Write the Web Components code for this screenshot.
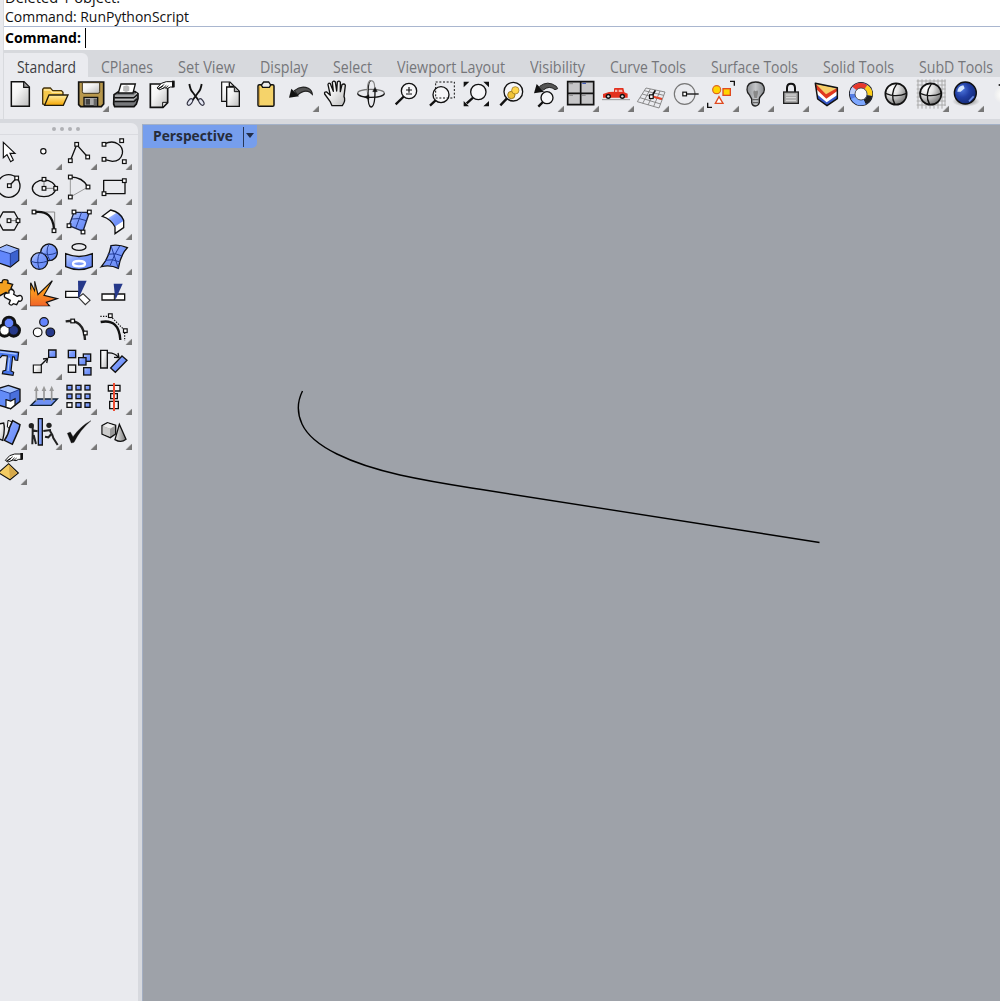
<!DOCTYPE html>
<html lang="en">
<head>
<meta charset="utf-8">
<title>Rhino – Perspective</title>
<style>
html,body{margin:0;width:1000px;height:1001px;overflow:hidden;background:#d7d9de}
</style>
</head>
<body>
<rhino-app></rhino-app>
<script>
// Artwork is drawn on a 105-unit cell. Each entry: [cell origin x, cell origin y, has flyout, shapes]
const ball = 'stroke="#111" stroke-width="4"';
const sq = (x,y,f='#fff') => `<rect x="${x-5.5}" y="${y-5.5}" width="11" height="11" fill="${f}" stroke="#111" stroke-width="3.6"/>`;
const hand = (x,y) => `<g transform="translate(${x} ${y})"><path d="M0 19L13 5 28 0H50V16H40L32 20 23 18 8 24 4 22 17 13 3 21Z" fill="#fff" stroke="#111" stroke-width="3" stroke-linejoin="round"/><path d="M11 17L22 8M18 20L28 11M26 19L34 12" stroke="#111" stroke-width="2.5"/><path d="M45 -3H53V17H45Z" fill="#111"/></g>`;
const lens = (x,y,r,hx,hy,f='#f6f6f8') => `<path d="M${x-r*.68} ${y+r*.72}L${hx} ${hy}" stroke="#111" stroke-width="7"/><circle cx="${x}" cy="${y}" r="${r}" fill="${f}" stroke="#111" stroke-width="4"/>`;
const sphere = (x,y) => `<circle cx="${x}" cy="${y}" r="32" fill="url(#gs)" stroke="#111" stroke-width="5"/><path d="M${x-32} ${y-2}Q${x} ${y+12} ${x+32} ${y-2}M${x+3} ${y-32}Q${x-20} ${y} ${x-3} ${y+32}" fill="none" stroke="#111" stroke-width="4"/>`;
const K='fill="none" stroke="#111" stroke-width="4" stroke-linejoin="round"';
const X2=i=>12+105*i, X3=i=>12+105*i-750, X4=i=>12+105*i-1500, X5=i=>12+105*i-2250;
const L=c=>-24+105*c, A=r=>45+105*r, B=r=>-300+105*r, C=r=>-630+105*r;
const ICONS = {
'new':[X2(0),3,0,`<path d="M34 17H72L88 33V91H34Z" fill="url(#gp)" stroke="#111" stroke-width="4.5"/><path d="M71 18V34H87" fill="#999" stroke="#111" stroke-width="3.5"/>`],
'open':[X2(1),3,0,`<path d="M128 84V40L132 36H151L158 44H184L189 49V57L184 86H134Z" fill="#f5c94c" stroke="#453410" stroke-width="4"/><path d="M132 42H150L157 49H186" fill="none" stroke="#ffe89c" stroke-width="4"/><path d="M134 88L147 57H204L190 88Z" fill="url(#gf)" stroke="#221c0c" stroke-width="4"/>`],
'save':[X2(2),3,1,`<path d="M236 18H311V84L304 92H242L236 86Z" fill="#b8984c" stroke="#111" stroke-width="5"/><path d="M247 20H299V47Q299 52 294 52H252Q247 52 247 47Z" fill="url(#gp)" stroke="#40351b" stroke-width="3"/><path d="M252 90V64H293V90Z" fill="#aaa" stroke="#111" stroke-width="4"/><path d="M257 69H270V86H257Z" fill="#444"/><path d="M281 68H291V89H281Z" fill="#666"/>`],
'print':[X2(3),3,0,`<path d="M342 56L356 47H405L414 53V68L409 84L402 92H344L341 84Z" fill="#77797c" stroke="#111" stroke-width="5"/><path d="M355 51L363 24H406L399 51Z" fill="#fff" stroke="#111" stroke-width="4"/><path d="M370 31L381 28 388 32V44L378 48 369 44Z" fill="#bbb"/><path d="M345 60H400L411 51M345 71H400L411 61" fill="none" stroke="#ccc" stroke-width="3"/><path d="M343 65H402L412 56M343 77H402L411 68" fill="none" stroke="#111" stroke-width="4"/>`],
'props':[X2(4),3,0,`<path d="M451 24H503V80L489 94H451Z" fill="url(#gp)" stroke="#111" stroke-width="5"/><path d="M502 79H488V94Z" fill="#eee" stroke="#111" stroke-width="3"/>${hand(471,17)}`],
'cut':[X2(5),3,0,`<path d="M568 24Q571 42 578 49L597 75M605 24Q602 42 595 49L576 75" fill="none" stroke="#111" stroke-width="5.5"/><ellipse cx="570" cy="78" rx="6" ry="11" transform="rotate(35 570 78)" fill="#e3e6f2" stroke="#334" stroke-width="3.5"/><ellipse cx="604" cy="78" rx="6" ry="11" transform="rotate(-35 604 78)" fill="#e3e6f2" stroke="#334" stroke-width="3.5"/>`],
'copy':[X2(6),3,0,`<path d="M665 18H690L702 30V76H665Z" fill="url(#gp)" stroke="#111" stroke-width="3.5"/><path d="M688 19V31H700" ${K}/><path d="M680 33H705L718 46V91H680Z" fill="url(#gp)" stroke="#111" stroke-width="4"/><path d="M703 34V47H717" fill="#aaa" stroke="#111" stroke-width="3"/>`],
'paste':[X3(7),3,0,`<rect x="24" y="26" width="48" height="65" rx="4" fill="#f5d36a" stroke="#111" stroke-width="4.5"/><path d="M28 31V88" stroke="#c99934" stroke-width="3"/><path d="M38 34L34 27 41 18H56L62 27 58 34Z" fill="#eee" stroke="#111" stroke-width="4"/>`],
'undo':[X3(8),3,1,`<path d="M133 44Q154 27 175 37 186 43 187 55L180 49Q163 39 143 57Z" fill="#555" stroke="#222" stroke-width="3.5"/><path d="M117 65L124 38 147 61Z" fill="#111"/>`],
'pan':[X3(9),3,0,`<path d="M246 89L240 76 224 54Q222 47 230 48L241 58 234 26Q235 19 241 23L250 46 247 19Q251 12 256 18L260 45 262 18Q268 12 271 19L271 47 276 26Q283 21 286 28L282 61Q288 73 277 89Z" fill="url(#gp)" stroke="#111" stroke-width="4" stroke-linejoin="round"/>`],
'rotate':[X3(10),3,0,`<path d="M323 52C323 36 403 36 403 52" stroke="#777" stroke-width="3.5" fill="none"/><path d="M323 52C323 68 403 68 403 52" ${K}/><path d="M363 14C351 14 351 93 363 93S375 60 375 45" ${K}/><path d="M363 14C351 14 352 42 352 49M363 14Q374 14 374 34" stroke="#888" stroke-width="3.5" fill="none"/><path d="M368 47L375 33 382 47ZM357 56L343 63 357 71Z" fill="#111" stroke="#111"/>`],
'zoom':[X3(11),3,0,`${lens(477,45,23,437,85)}<path d="M468 42H486M477 33V50M468 54H486" stroke="#111" stroke-width="3.5"/>`],
'zoomwin':[X3(12),3,0,`${lens(573,56,24,540,89)}<path d="M557 18H613V66H557Z" fill="none" stroke="#111" stroke-width="3" stroke-dasharray="6 5"/>`],
'zoomext':[X3(13),3,0,`${lens(685,48,23,650,82)}<path d="M641 17H658L641 34ZM717 17V34L700 17ZM641 91V75L657 91ZM717 91H700L717 75Z" fill="#111"/>`],
'zoomsel':[X4(14),3,0,`${lens(40,47,28,1,88)}<path d="M27 57L41 45" stroke="#e8bb38" stroke-width="8"/><circle cx="34" cy="57" r="11" fill="#f1c439" stroke="#8c6b17" stroke-width="2.5"/><circle cx="46" cy="43" r="11" fill="#ffd54c" stroke="#8c6b17" stroke-width="2"/>`],
'zoomundo':[X4(15),3,1,`${lens(141,65,18,115,92)}<path d="M119 31Q143 12 169 31L173 38 165 41Q148 27 130 42Z" fill="#555" stroke="#222" stroke-width="3"/><path d="M102 52L110 24 132 47Z" fill="#111"/>`],
'4view':[X4(16),3,1,`<path d="M203 17H281V86H203Z" fill="#c5c5c7" stroke="#111" stroke-width="5"/><path d="M242 17V86M203 52H281" stroke="#111" stroke-width="5"/><path d="M208 23H219M246 58H257M208 58H219" stroke="#888" stroke-width="3"/><path d="M247 22H258" stroke="#2b49b5" stroke-width="3"/>`],
'car':[X4(17),3,1,`<path d="M306 71H390" stroke="#999" stroke-width="3"/><path d="M309 65V54L327 48 342 47V38Q342 36 345 36H370L373 49 383 53V65Z" fill="#e3311f"/><path d="M345 41H352V48H345ZM356 41H366L368 48H356Z" fill="#f7b5ad"/><circle cx="325" cy="61" r="8" fill="#111"/><circle cx="367" cy="61" r="8" fill="#111"/><circle cx="325" cy="61" r="3.5" fill="#ddd"/><circle cx="367" cy="61" r="3.5" fill="#ddd"/>`],
'cplane':[X4(18),3,1,`<path d="M438 36L495 48 477 96 412 77ZM433 44L491 58M427 54L486 71M420 65L482 84M451 39L428 82M466 42L444 87M480 45L461 91" fill="none" stroke="#777" stroke-width="2.5"/><path d="M455 61L486 69" stroke="#e64327" stroke-width="6"/><path d="M456 60L466 43" stroke="#111" stroke-width="5"/>${sq(454,62)}`],
'setview':[X4(19),3,1,`<circle cx="554" cy="54" r="31" fill="none" stroke="#777" stroke-width="3.5"/><path d="M554 54H596" stroke="#111" stroke-width="4"/>${sq(554,54)}`],
'objsnap':[X4(20),3,1,`<path d="M690 16H703V29M623 80V94H636" fill="none" stroke="#111" stroke-width="4"/><circle cx="650" cy="41" r="12" fill="#ffd500" stroke="#dd6520" stroke-width="3.5"/><rect x="669" y="38" width="22" height="20" fill="#ffd500" stroke="#df4a20" stroke-width="4"/><path d="M657 62L669 82H646Z" fill="#fff" stroke="#df4a20" stroke-width="4"/>`],
'bulb':[X5(21),81,1,`<path d="M-9 119Q-9 96 17 96T43 119Q43 127 35 135 29 141 28 146V158Q25 168 16 168T5 158V147L-2 134Q-9 127 -9 119Z" fill="url(#gk)" stroke="#222" stroke-width="4"/><path d="M10 128Q10 118 17 124 25 118 24 128L21 144H13Z" fill="#888"/><path d="M7 149H26M8 158H26" stroke="#555" stroke-width="3"/>`],
'lock':[X5(22),81,1,`<path d="M111 127V114Q111 101 123 101T135 114V127" fill="none" stroke="#111" stroke-width="6"/><rect x="101" y="126" width="44" height="34" fill="#aaa" stroke="#222" stroke-width="4"/><path d="M108 135H138M108 143H138M108 151H138" stroke="#ddd" stroke-width="3"/>`],
'layer':[X5(23),81,1,`<path d="M196 100L262 113V146L231 167 203 147Z" fill="#3457c8"/><path d="M197 106L229 137 261 114V136L230 157 201 133Z" fill="#fff"/><path d="M196 100L228 130 261 114V124L229 146 199 118Z" fill="#e0381f"/><path d="M197 101L261 114 228 133Z" fill="#f7ce68"/><path d="M196 100L262 113V146L231 167 203 147Z" fill="none" stroke="#111" stroke-width="4.500" stroke-linejoin="round"/>`],
'color':[X5(24),81,1,`<circle cx="333" cy="132" r="36" fill="#111"/><g fill="none" stroke-width="15"><circle cx="333" cy="132" r="26" stroke="#557ce4"/><path d="M312 117A26 26 0 0 1 348 111" stroke="#e7392b"/><path d="M348 111A26 26 0 0 1 359 137" stroke="#ffcf18"/><path d="M359 137A26 26 0 0 1 344 156" stroke="#222"/><path d="M344 156A26 26 0 0 1 310 144" stroke="#7ea8ff"/><path d="M307 132A26 26 0 0 1 313 115" stroke="#bdcef9"/></g><circle cx="333" cy="132" r="18" fill="#f7f7fa" stroke="#333" stroke-width="2"/>`],
'shade':[X5(25),81,0,sphere(438,132)],
'shadegrid':[X5(26),81,1,`<path d="M500 93H587M500 105H587M500 117H587M500 129H587M500 141H587M500 153H587M500 165H587M504 88V176M516 88V176M528 88V176M540 88V176M552 88V176M564 88V176M576 88V176M585 88V168" stroke="#aaa" stroke-width="3"/>${sphere(542,132)}`],
'render':[X5(27),81,1,`<ellipse cx="648" cy="154" rx="42" ry="16" fill="url(#sh)"/><circle cx="646" cy="129" r="33" fill="url(#gb)" stroke="#111" stroke-width="4"/><path d="M622 125Q623 109 640 106L644 115 632 125Z" fill="#d5e6ff"/><path d="M657 154L671 139" stroke="#6f91e8" stroke-width="5"/>`],
'ghost':[X5(28),81,0,`<circle cx="757" cy="134" r="26" fill="url(#gw)"/><path d="M746 102H750V108H746Z" fill="#333"/>`],

'select':[L(0),A(0),0,`<path d="M10 67V113L21 104 32 125 40 120 30 100H45Z" fill="#fff" stroke="#111" stroke-width="3.5"/>`],
'point':[L(1),A(0),1,`<circle cx="130" cy="94" r="8" fill="#fff" stroke="#111" stroke-width="3.5"/>`],
'polyline':[L(2),A(0),1,`<path d="M211 122L230 74 263 111" ${K}/>${sq(230,73)+sq(211,122)+sq(263,111)}`],
'curve':[L(3),A(0),1,`<path d="M313 72Q337 60 354 72 370 82 367 101 362 124 337 124L312 118" ${K}/>${sq(312,73)+sq(365,62)+sq(312,118)+sq(373,125)}`],
'circle':[L(0),A(1),1,`<circle cx="26" cy="198" r="34" ${K}/><path d="M28 197L50 174" ${K}/>${sq(28,197)+sq(50,174)}`],
'ellipse':[L(1),A(1),1,`<ellipse cx="132" cy="205" rx="35" ry="25" ${K}/><path d="M132 178V205H167" stroke="#777" stroke-width="3" fill="none"/>${sq(132,178)+sq(132,205)+sq(167,205)}`],
'arc':[L(2),A(1),1,`<path d="M211 171V231L264 201" fill="none" stroke="#888" stroke-width="2.5"/><path d="M211 171Q248 171 264 201" ${K}/>${sq(211,171)+sq(264,201)+sq(211,231)}`],
'rect':[L(3),A(1),1,`<path d="M311 181H375V221H311Z" ${K}/>${sq(373,182)+sq(312,221)}`],
'polygon':[L(0),A(2),1,`<path d="M9 276H43L58 303 43 330H9L-6 303Z" ${K}/><path d="M28 302H54" stroke="#777" stroke-width="3"/>${sq(27,302)+sq(54,302)}`],
'fillet':[L(1),A(2),1,`<path d="M102 276H164V332" stroke="#888" stroke-width="3" fill="none"/><path d="M105 276Q158 270 162 327" fill="none" stroke="#111" stroke-width="7"/>${sq(102,276)+sq(162,332)}`],
'surface':[L(2),A(2),1,`<path d="M222 277L268 277 249 334 207 317Z" fill="url(#bl)" stroke="#1c2440" stroke-width="4"/><path d="M245 276L227 325M216 297Q236 292 259 302" stroke="#233b8c" stroke-width="3" fill="none"/>${sq(222,276)+sq(268,276)+sq(207,317)+sq(249,336)}`],
'revolve':[L(3),A(2),1,`<path d="M307 289L332 270 354 280 371 299V323L345 341V321Q333 297 307 289Z" fill="#fff"/><path d="M324 295L352 277Q372 289 371 302L344 320Q340 304 324 295Z" fill="url(#bl)"/><path d="M307 289L332 270Q362 277 371 301V323L345 341V321Q333 297 307 289Z" fill="none" stroke="#111" stroke-width="4"/>`],
'box':[L(0),B(3),1,`<path d="M-9 43L20 30 56 43V76L31 96-9 82Z" fill="#6287fb" stroke="#111" stroke-width="4"/><path d="M-9 44L31 56 56 44 20 31Z" fill="#9bb8ff"/><path d="M31 56L55 45V75L31 94Z" fill="#3c62cf"/><path d="M-9 44L31 56 56 44M31 56V95" fill="none" stroke="#233e96" stroke-width="3"/>`],
'union':[L(1),B(3),1,`<circle cx="147" cy="52" r="25" fill="url(#bl)" ${ball}/><circle cx="118" cy="78" r="25" fill="url(#bl)" ${ball}/><path d="M122 52Q145 66 172 52M147 27Q134 50 150 77M93 79Q117 88 143 78M119 53Q108 76 118 103" fill="none" stroke="#233d90" stroke-width="3"/>`],
'extrude':[L(2),B(3),1,`<ellipse cx="237" cy="36" rx="21" ry="10" ${K}/><path d="M197 56Q237 73 277 56V95Q237 113 197 95Z" fill="url(#bl)" stroke="#111" stroke-width="4"/><ellipse cx="237" cy="86" rx="18" ry="8" fill="#7e9cf9" stroke="#fff" stroke-width="7"/>`],
'patch':[L(3),B(3),1,`<path d="M333 32Q356 27 382 38Q362 58 355 100Q330 88 304 95Q326 70 333 32Z" fill="url(#bl)" stroke="#111" stroke-width="4"/><path d="M359 33Q342 60 330 92M323 58Q347 52 367 63M315 76Q337 70 360 81M333 32L355 100" stroke="#223c9a" stroke-width="3" fill="none"/>`],
'join':[L(0),B(4),1,`<path d="M-9 143L6 143Q7 132 16 134 27 134 23 144L38 148 33 160Q44 167 37 175L25 180 18 172-2 183Z" fill="#f4a020" stroke="#111" stroke-width="4"/><path d="M16 175L27 174Q25 162 35 164 46 167 41 178L51 184Q66 177 67 190 66 201 56 198L50 209 40 206Q34 215 27 206L31 196 20 190Q8 186 16 175Z" fill="#fff" stroke="#111" stroke-width="4"/>`],
'explode':[L(1),B(4),0,`<path d="M92 212V143L106 171 104 139 114 179 157 137 132 181 172 191 139 202 148 212Z" fill="url(#or)" stroke="#111" stroke-width="3.5"/><path d="M91 212V162L105 184V152L112 188 144 155 124 188 155 191 131 199 145 212Z" fill="url(#or)"/>`],
'trim':[L(2),B(4),0,`<path d="M197 169H236V187H197Z" fill="#fff" stroke="#111" stroke-width="4"/><path d="M249 176L270 196 256 209 235 187Z" fill="#fff" stroke="#333" stroke-width="3.5"/><path d="M234 137H260L235 191Z" fill="#26398a"/>`],
'split':[L(3),B(4),0,`<path d="M306 177H374V195H306Z" fill="#fff" stroke="#111" stroke-width="4"/><path d="M343 177V195" stroke="#111" stroke-width="3"/><path d="M341 146H368L346 195Z" fill="#26398a"/>`],
'group':[L(0),B(5),1,`<g stroke="#111" stroke-width="12"><circle cx="27" cy="264" r="16" fill="#6384ff"/><circle cx="14" cy="286" r="16" fill="#fff"/><circle cx="41" cy="286" r="16" fill="#26398a"/></g><g stroke="#111" stroke-width="2"><circle cx="14" cy="286" r="14" fill="#fff"/><circle cx="41" cy="286" r="14" fill="#26398a"/><circle cx="27" cy="264" r="14" fill="#6384ff"/></g>`],
'ungroup':[L(1),B(5),0,`<g stroke="#111" stroke-width="3.5"><circle cx="132" cy="261" r="13" fill="#6384ff"/><circle cx="113" cy="292" r="13" fill="#fff"/><circle cx="151" cy="292" r="13" fill="#26398a"/></g>`],
'edit':[L(2),B(5),0,`<path d="M197 259Q252 251 255 315" fill="none" stroke="#222" stroke-width="7"/>${sq(218,258)+sq(256,294)}`],
'cage':[L(3),B(5),1,`<path d="M302 261Q357 250 361 315" fill="none" stroke="#111" stroke-width="7"/><path d="M301 244H325M337 249L370 282M374 293V318" stroke="#111" stroke-width="3.5" stroke-dasharray="4 4"/>${sq(331,242)+sq(376,287)}`],
'text':[L(0),C(6),0,`<path d="M-11 14L56 22 53 46 45 45 43 36 38 35 33 78 41 82 39 91 7 86 9 78 17 76 22 33 7 31 1 38-11 36Z" fill="#4675ed" stroke="#111" stroke-width="3.5"/><path d="M0 21L50 27M28 38L24 78" stroke="#a9c5ff" stroke-width="4"/>`],
'move':[L(1),C(6),1,`<path d="M120 63L141 42" stroke="#111" stroke-width="4"/><path d="M129 42L143 40 140 54" ${K}/><path d="M100 60H124V83H100Z" fill="url(#gp)" stroke="#111" stroke-width="3.5"/><path d="M146 15H168V37H146Z" fill="url(#bl)" stroke="#111" stroke-width="4"/>`],
'copyobj':[L(2),C(6),0,[[205,16],[250,27],[236,38],[251,68],[205,60]].map(([x,y],i)=>`<rect x="${x}" y="${y}" width="22" height="22" fill="${i==4?'#eee':'url(#bl)'}" stroke="#111" stroke-width="4"/>`).join('')],
'orient':[L(3),C(6),0,`<path d="M302 16H322V69H302Z" fill="url(#gp)" stroke="#111" stroke-width="4"/><path d="M322 24Q343 22 355 37M342 37L357 38 354 24" ${K}/><path d="M366 33L381 46 346 82 332 69Z" fill="url(#bl)" stroke="#111" stroke-width="4"/>`],
'solid':[L(0),C(7),1,`<path d="M-9 132L25 121 60 133V169L32 191-9 179Z" fill="#638cf8"/><path d="M-9 132L30 145 60 133 25 122Z" fill="#a3c1ff"/><path d="M30 145L60 133V169L32 191Z" fill="#4a70dc"/><path d="M-9 132L30 145 60 133M30 145V165" fill="none" stroke="#233e96" stroke-width="3"/><path d="M-9 132L25 121 60 133V169L32 191-9 179" fill="none" stroke="#111" stroke-width="4"/><path d="M18 164L32 168 45 161V180L32 191 18 187Z" fill="#fff" stroke="#111" stroke-width="3.500"/>`],
'project':[L(1),C(7),1,`<path d="M93 181L112 162H172L154 181Z" fill="#6f91f4" stroke="#123" stroke-width="4"/><path d="M109 169V132M132 169V132M155 169V132" stroke="#999" stroke-width="5"/><path d="M102 138L109 122 116 138ZM125 138L132 122 139 138ZM148 138L155 122 162 138Z" fill="#999"/>`],
'array':[L(2),C(7),1,[0,1,2,3,4,5,6,7,8].map(i=>`<rect x="${201+27*(i%3)}" y="${121+26*Math.floor(i/3)}" width="15" height="14" fill="${i==6?'#fff':'url(#bl)'}" stroke="#111" stroke-width="4"/>`).join('')],
'align':[L(3),C(7),1,`<path d="M325 121H360V138H325ZM332 146H352V161H332ZM329 169H355V191H329Z" fill="#f3f3f4" stroke="#111" stroke-width="4"/><path d="M342 114V198" stroke="#ed4c32" stroke-width="6"/>`],
'bend':[L(0),C(8),1,`<path d="M-8 238L11 234Q16 254 8 286L-8 280Z" fill="url(#gp)" stroke="#111" stroke-width="4"/><path d="M22 246L24 226 40 232 28 250Z" fill="#fff" stroke="#111" stroke-width="3"/><path d="M38 227L60 239Q58 254 50 268L37 298 13 286Q26 268 29 247Z" fill="url(#bl)" stroke="#111" stroke-width="4.500"/>`],
'flow':[L(1),C(8),1,`<g fill="none" stroke="#222" stroke-width="6"><path d="M98 245V267L97 298M97 256L113 259M101 270L108 297M150 258L157 270 160 279 173 300M130 258L153 255M154 267L145 277 135 275"/></g><path d="M115 221H127V300H115Z" fill="#7f9df8" stroke="#111" stroke-width="4"/><circle cx="94" cy="242" r="8" fill="#222"/><circle cx="147" cy="241" r="8" fill="#222"/>`],
'check':[L(2),C(8),1,`<path d="M202 265L211 261 219 275Q244 241 273 227 241 253 222 292L214 294Z" fill="#111" stroke="#111"/>`],
'mesh':[L(3),C(8),1,`<path d="M306 242L322 233 347 241V267L331 278 306 267Z" fill="#999" stroke="#111" stroke-width="4"/><path d="M308 243L323 235 345 242 330 251Z" fill="#eee"/><path d="M308 244L330 251V275L308 266Z" fill="#ccc"/><path d="M358 238L378 283Q363 295 345 284Z" fill="url(#gc)" stroke="#111" stroke-width="4"/>`],
'pyramid':[L(0),C(9),1,`<path d="M-5 383L26 356 55 384 30 404Z" fill="#f4cc63" stroke="#111" stroke-width="3.5"/><path d="M26 359L30 401 52 384Z" fill="#d5a84a"/>${hand(16,327)}`]
};
const TOP='new open save print props cut copy paste undo pan rotate zoom zoomwin zoomext zoomsel zoomundo 4view car cplane setview objsnap bulb lock layer color shade shadegrid render ghost'.split(' ');
const SIDE='select point polyline curve circle ellipse arc rect polygon fillet surface revolve box union extrude patch join explode trim split group ungroup edit cage text move copyobj orient solid project array align bend flow check mesh pyramid'.split(' ');
const DEFS=`<defs>
<linearGradient id="gp" x2="1" y2="1"><stop stop-color="#fff"/><stop offset=".4" stop-color="#f4f4f4"/><stop offset="1" stop-color="#bbb"/></linearGradient>
<linearGradient id="gf" x2="0" y2="1"><stop stop-color="#fff0a6"/><stop offset="1" stop-color="#f5a500"/></linearGradient>
<linearGradient id="gk"><stop stop-color="#8d9094"/><stop offset=".5" stop-color="#c4c6c9"/><stop offset="1" stop-color="#85888c"/></linearGradient>
<radialGradient id="gs" cx=".3" cy=".25" r=".8"><stop stop-color="#fff"/><stop offset=".4" stop-color="#e2e2e2"/><stop offset="1" stop-color="#777"/></radialGradient>
<radialGradient id="gw"><stop stop-color="#fff"/><stop offset=".6" stop-color="#f3f3f2"/><stop offset="1" stop-color="#eaebef"/></radialGradient>
<radialGradient id="gb" cx=".35" cy=".35" r=".7"><stop stop-color="#4d76dc"/><stop offset=".5" stop-color="#213ea4"/><stop offset="1" stop-color="#142a75"/></radialGradient>
<radialGradient id="sh"><stop stop-color="#444"/><stop offset="1" stop-color="#888" stop-opacity="0"/></radialGradient>
<linearGradient id="bl" x2="1" y2="1"><stop stop-color="#c4d4ff"/><stop offset=".4" stop-color="#7e9dfc"/><stop offset="1" stop-color="#5f83f5"/></linearGradient>
<linearGradient id="or" x2="0" y2="1"><stop stop-color="#ffb31a"/><stop offset="1" stop-color="#f06428"/></linearGradient>
<linearGradient id="gc"><stop stop-color="#eee"/><stop offset="1" stop-color="#777"/></linearGradient></defs>`;

const define=(name,html,setup)=>{
  const t=document.createElement('template'); t.innerHTML=html;
  customElements.define(name,class extends HTMLElement{
    connectedCallback(){
      if(this.shadowRoot) return;
      this.attachShadow({mode:'open'}).append(t.content.cloneNode(true));
      if(setup) setup(this,this.shadowRoot);
    }
  });
};
define('tool-icon','<style>:host{display:block;width:35px;height:35px;flex:none}svg{display:block;overflow:visible}</style><svg width="35" height="35"></svg>',(el,root)=>{
  const [x,y,menu,art]=ICONS[el.getAttribute('name')];
  const s=root.querySelector('svg');
  s.setAttribute('viewBox',`${x} ${y} 105 105`);
  s.innerHTML=DEFS+art+(menu?`<path d="M${x+105} ${y+86}V${y+105}H${x+86}Z" fill="#777"/><path d="M${x+103} ${y+88}L${x+88} ${y+103}" stroke="#999" stroke-width="2"/>`:'');
});
// A label squeezed horizontally to the width given in its "w" attribute
define('ui-label','<style>:host{display:block;white-space:nowrap;flex:none}span{display:inline-block;transform-origin:0 50%}</style><span><slot></slot></span>',(el,root)=>{
  const w=+el.getAttribute('w'); el.style.width=w+'px';
  const s=root.querySelector('span');
  s.style.transform=`scaleX(${w/s.getBoundingClientRect().width})`;
});
define('command-prompt',`<style>
:host{display:block;height:50px;background:#fff;color:#111;font:15px/19px "Open Sans","Noto Sans",sans-serif}
.log{height:26px;overflow:hidden;display:flex;flex-direction:column;justify-content:flex-end;border-bottom:1px solid #a9b6cf;padding-left:1px}
.in{display:flex;height:21px;align-items:center;font-weight:700;color:#000;padding-left:1px}
i{width:1px;height:20px;background:#000;margin-left:4px}
</style><div class="log"><ui-label w="115">Deleted 1 object.</ui-label><ui-label w="184">Command: RunPythonScript</ui-label></div>
<div class="in"><ui-label w="76">Command:</ui-label><i></i></div>`);
define('tab-strip',`<style>
:host{display:flex;height:27px;background:#d7d9dd;font:16px/27px "Open Sans","Noto Sans",sans-serif;color:#75767a;overflow:hidden}
div{padding:3px 12.5px 0;height:24px;line-height:28px;flex:none}
.on{background:#eaebef;color:#3c3d42;border-radius:0 6px 0 0;padding-left:13px;padding-right:12px;margin-top:3px;padding-top:0}
</style>`,(el,root)=>{
  [['Standard',59],['CPlanes',52],['Set View',57],['Display',48],['Select',39],['Viewport Layout',108],['Visibility',55],['Curve Tools',76],['Surface Tools',87],['Solid Tools',71],['SubD Tools',74]].forEach(([t,w],i)=>{
    const d=document.createElement('div'); if(!i)d.className='on';
    d.innerHTML=`<ui-label w="${w}">${t}</ui-label>`; root.append(d);
  });
});
define('main-toolbar','<style>:host{display:flex;height:42px;background:#eaebef;overflow:hidden}</style>',(el,root)=>{
  TOP.forEach(n=>{const i=document.createElement('tool-icon');i.setAttribute('name',n);root.append(i)});
});
define('side-toolbar',`<style>
:host{display:block;width:138px;background:#e9eaee;border-radius:0 7px 0 0;overflow:hidden}
.grip{height:11px;display:flex;gap:4px;align-items:center;padding-left:52px;border-bottom:1px solid #dadbe0}
.grip b{box-sizing:border-box;width:4px;height:4px;border-radius:50%;background:#b0b1b5}
.grid{display:grid;grid-template-columns:repeat(4,35px);margin-left:-8px}
</style><div class="grip"><b></b><b></b><b></b><b></b></div><div class="grid"></div>`,(el,root)=>{
  SIDE.forEach(n=>{const i=document.createElement('tool-icon');i.setAttribute('name',n);root.querySelector('.grid').append(i)});
});
define('view-port',`<style>
:host{display:grid;background:#9ea2a9;border-top:1px solid #a3b1c7;border-left:1px solid #a3aec2;box-sizing:border-box}
.tag,svg{grid-area:1/1}
.tag{display:flex;width:114px;height:23px;background:#769eed;border-radius:0 0 5px 0;color:#262c3a;font:700 15px/20px "Open Sans","Noto Sans",sans-serif;z-index:1}
ui-label{margin-left:10px}
.sep{width:1px;height:20px;margin:2px 0 0 10px;background:#283756}
.arrow{margin:8px 0 0 2px;width:0;height:0;border:4.5px solid transparent;border-top:5px solid #222d48;border-bottom:0}
svg{display:block}
</style><div class="tag"><ui-label w="80">Perspective</ui-label><span class="sep"></span><span class="arrow"></span></div>
<svg width="857" height="876" viewBox="143 125 857 876"><path d="M302.500 391C297.500 401 297 413 302 424C312.500 447 352 464 400 475C432 482 456 485.500 480 489.300L819.500 542.500" fill="none" stroke="#000" stroke-width="1.400"/></svg>`);
define('rhino-app',`<style>
:host{display:flex;flex-direction:column;width:1000px;height:1001px;background:#d7d9de;overflow:hidden}
.top{display:flex;height:119px;flex:none}
.edge{width:3px;background:#e9eaee;border-right:1px solid #d8dade;flex:none}
.col{flex:1;min-width:0}
.work{display:flex;flex:1;padding-top:5px;gap:4px;min-height:0}
side-toolbar{margin-top:-1px;flex:none}
view-port{flex:1}
</style><div class="top"><div class="edge"></div><div class="col"><command-prompt></command-prompt><tab-strip></tab-strip><main-toolbar></main-toolbar></div></div>
<div class="work"><side-toolbar></side-toolbar><view-port></view-port></div>`);
</script>
</body>
</html>
